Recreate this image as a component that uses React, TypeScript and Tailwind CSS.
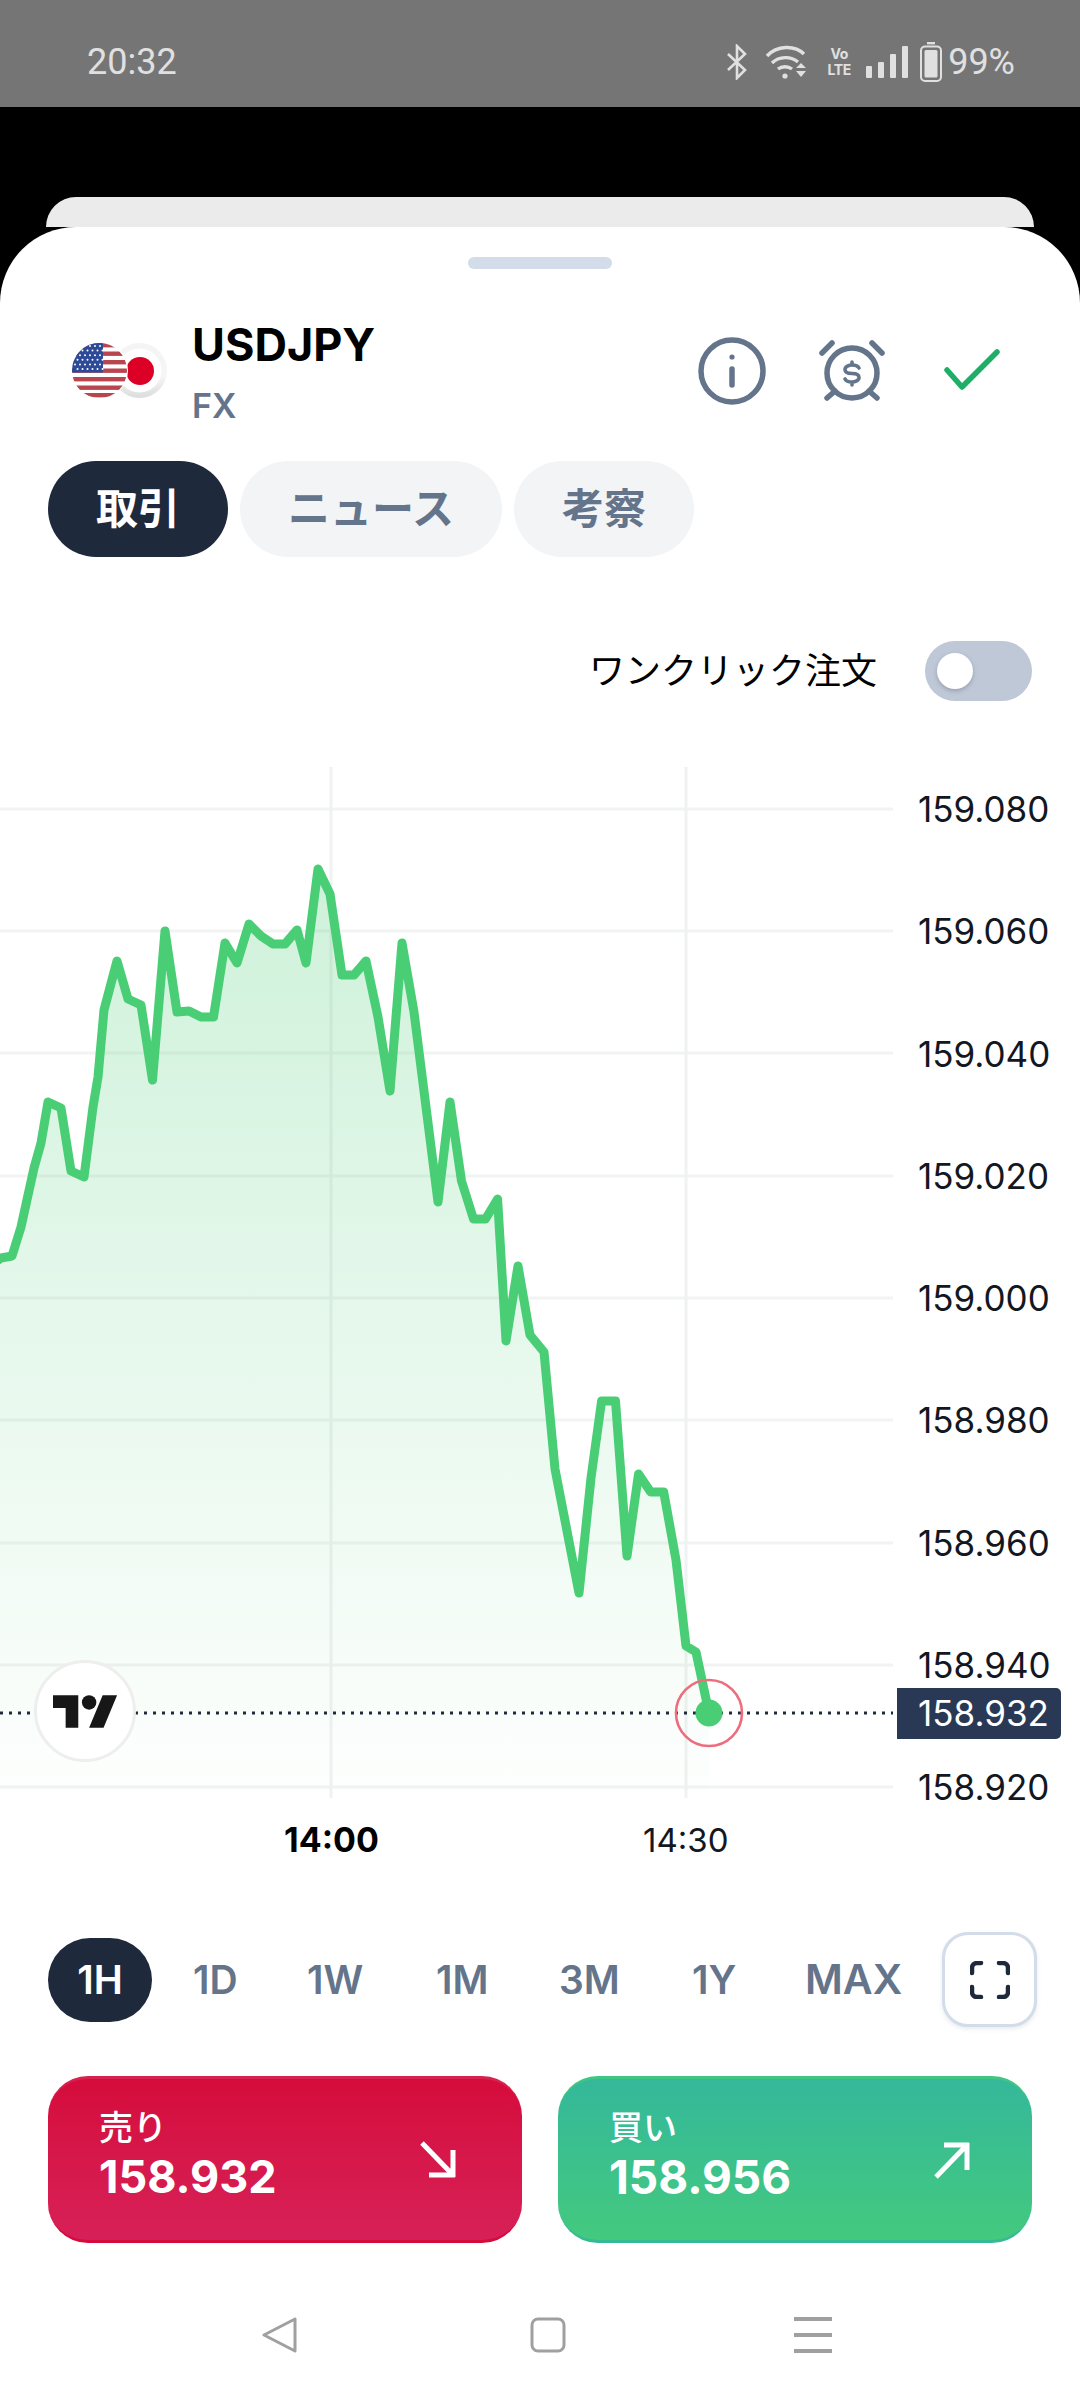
const points: [number, number][] = [
  [-6, 1263], [1, 1258], [12, 1256], [21, 1227], [34, 1168], [41, 1143], [48, 1102], [61, 1108], [71, 1171], [84, 1177],
  [93, 1107], [98, 1077], [104, 1010], [117, 961], [128, 999], [141, 1005], [152.5, 1080], [165, 931], [177, 1012], [189, 1011],
  [201, 1017], [213.5, 1017], [225, 943], [237, 963], [249, 924], [261, 936], [273, 944], [285, 944], [297, 930], [306, 963],
  [318, 869], [330, 894], [342, 975], [354, 975], [366, 961], [378, 1017], [390, 1091], [402, 943], [414, 1012], [426, 1107],
  [438, 1202], [450, 1102], [461.5, 1181], [473.5, 1219], [485.5, 1219], [497.6, 1199], [506, 1341], [518, 1266], [530, 1335], [544, 1352],
  [555, 1469], [579, 1593], [591, 1478], [601.6, 1401], [615.5, 1401], [627, 1556], [638.5, 1474], [650.7, 1492], [663.7, 1492], [676, 1560],
  [686, 1646], [696, 1652], [709, 1713],
];

const linePoints = points.map(([x, y]) => `${x},${y}`).join(' ');
const areaPoints = `${linePoints} 709,1790 -6,1790`;

const gridLines = [809, 931, 1053, 1176, 1298, 1420, 1543, 1665, 1787];
const priceLabels = ['159.080', '159.060', '159.040', '159.020', '159.000', '158.980', '158.960', '158.940', '158.920'];
const ranges = [
  { label: '1D', className: 'w-[42px] ml-[74px]' },
  { label: '1W', className: 'w-[55px] ml-[72px]' },
  { label: '1M', className: 'w-[49px] ml-[74px]' },
  { label: '3M', className: 'w-[59px] ml-[74px]' },
  { label: '1Y', className: 'w-[40px] ml-[74px]' },
  { label: 'MAX', className: 'w-[93px] ml-[73px] text-[41px]' },
];

const usStars: [number, number][] = [];
for (let row = 0; row < 6; row++) {
  for (let col = 0; col < 6; col++) {
    usStars.push([3 + col * 5 + (row % 2) * 2.5, 3 + row * 4.6]);
  }
}

function Flags() {
  return (
    <svg className="w-[95px] h-[55px] shrink-0" viewBox="0 0 95 55">
      <defs>
        <clipPath id="us-clip">
          <circle cx="27.5" cy="27.5" r="27.5" />
        </clipPath>
        <linearGradient id="jp-ring" x1="0" y1="0" x2="0" y2="1">
          <stop offset="0" stopColor="#f4f4f4" />
          <stop offset="0.6" stopColor="#f6f6f6" />
          <stop offset="1" stopColor="#dcdcdc" />
        </linearGradient>
      </defs>
      <circle cx="67.5" cy="27.5" r="27.5" fill="url(#jp-ring)" />
      <circle cx="67.5" cy="27.5" r="22" fill="#ffffff" />
      <circle cx="68" cy="28" r="14" fill="#dd0026" />
      <circle cx="27.5" cy="27.5" r="28.5" fill="#ffffff" />
      <g clipPath="url(#us-clip)">
        <rect width="55" height="55" fill="#ffffff" />
        {[0, 8.5, 17, 25.5, 34, 42.5, 50].map(y => (
          <rect key={y} y={y} width="55" height="4.4" fill="#b9464f" />
        ))}
        <rect width="31" height="29.5" fill="#2c4a97" />
        {usStars.map(([x, y]) => (
          <circle key={`${x}-${y}`} cx={x} cy={y} r="1" fill="#ffffff" />
        ))}
      </g>
    </svg>
  );
}

function StatusIcons() {
  return (
    <div className="flex items-center">
      <svg className="w-[22px] h-[36px]" viewBox="0 0 22 36" fill="none" stroke="#e0e0e0" strokeWidth="2.6">
        <path d="M2 10l17 16-8 8V2l8 8L2 26" />
      </svg>
      <svg className="w-[42px] h-[36px] ml-[17px]" viewBox="0 0 42 36" fill="none" stroke="#e0e0e0" strokeWidth="3.4">
        <path d="M2 12C12 1 30 1 39 10" />
        <path d="M7 19c7-7 19-7 26-1" />
        <path d="M13 25c4-3 10-3 14 0" />
        <circle cx="20" cy="32" r="2.6" fill="#e0e0e0" stroke="none" />
        <path d="M31 24h10l-5-5zM31 27h10l-5 6z" fill="#e0e0e0" stroke="none" />
      </svg>
      <div className="w-[22px] ml-[21px] flex flex-col items-center text-[#e0e0e0] text-[14px] font-bold leading-[16px] tracking-tight">
        <span>Vo</span>
        <span>LTE</span>
      </div>
      <svg className="w-[44px] h-[32px] ml-[16px]" viewBox="0 0 44 32" fill="#e0e0e0">
        <rect x="0" y="20" width="6" height="12" rx="1" />
        <rect x="12" y="16" width="6" height="16" rx="1" />
        <rect x="24" y="8" width="6" height="24" rx="1" />
        <rect x="36" y="0" width="6" height="32" rx="1" />
      </svg>
      <svg className="w-[22px] h-[40px] ml-[10px]" viewBox="0 0 22 40" fill="none">
        <rect x="7" y="0" width="8" height="2.4" fill="#e0e0e0" />
        <rect x="1" y="4.5" width="20" height="34.5" rx="4" stroke="#e0e0e0" strokeWidth="2" />
        <rect x="4.5" y="8" width="13" height="27.5" rx="1.5" fill="#e0e0e0" />
      </svg>
      <span className="ml-[6px] text-[36px] leading-none text-[#e0e0e0]" style={{ fontFamily: 'Roboto, sans-serif' }}>99%</span>
    </div>
  );
}

function PriceChart() {
  return (
    <svg className="w-[893px] h-[1070px] shrink-0" viewBox="0 740 893 1070">
      <defs>
        <linearGradient id="area-fill" gradientUnits="userSpaceOnUse" x1="0" y1="869" x2="0" y2="1790">
          <stop offset="0" stopColor="#4acd75" stopOpacity="0.27" />
          <stop offset="1" stopColor="#4acd75" stopOpacity="0.01" />
        </linearGradient>
      </defs>
      {gridLines.map(y => (
        <line key={y} x1="0" x2="893" y1={y} y2={y} stroke="#f2f3f3" strokeWidth="3" />
      ))}
      <line x1="331" x2="331" y1="767" y2="1798" stroke="#f0f1f1" strokeWidth="3" />
      <line x1="686" x2="686" y1="767" y2="1798" stroke="#f0f1f1" strokeWidth="3" />
      <polygon points={areaPoints} fill="url(#area-fill)" />
      <line x1="0" x2="893" y1="1713" y2="1713" stroke="#1e293b" strokeWidth="3" strokeDasharray="3 6" />
      <polyline points={linePoints} fill="none" stroke="#49ce76" strokeWidth="9" strokeLinejoin="round" strokeLinecap="round" />
      <circle cx="709" cy="1713" r="13.5" fill="#49ce76" />
      <circle cx="709" cy="1713" r="33" fill="none" stroke="#ec6e7c" strokeWidth="2.6" />
    </svg>
  );
}

export default function App() {
  return (
    <div
      className="w-[1080px] h-[2400px] bg-black flex flex-col overflow-hidden"
      style={{ fontFamily: 'Inter, "Noto Sans CJK JP", sans-serif' }}
    >
      <div className="h-[107px] shrink-0 bg-[#757575] flex items-center justify-between pl-[87px] pr-[65px] pt-[16px]">
        <span className="text-[36px] leading-none text-[#e0e0e0]" style={{ fontFamily: 'Roboto, sans-serif' }}>20:32</span>
        <StatusIcons />
      </div>

      <div className="mt-[90px] mx-[46px] h-[30px] shrink-0 rounded-t-[30px] bg-[#ebebeb]" />

      <div className="flex-1 bg-white rounded-t-[76px] flex flex-col">
        <div className="mt-[30px] mx-auto w-[144px] h-[12px] rounded-full bg-[#d3dce9]" />

        {/* header */}
        <div className="mt-[51px] h-[105px] flex items-start pl-[72px]">
          <div className="mt-[23px]"><Flags /></div>
          <div className="ml-[25px] flex flex-col">
            <span className="text-[45px] leading-[50px] font-bold text-black">USDJPY</span>
            <span className="mt-[16px] text-[34px] leading-[40px] font-semibold text-[#64748b]">FX</span>
          </div>
          <div className="ml-auto flex items-start pr-[78px]">
            <svg className="w-[70px] h-[70px] mt-[16px]" viewBox="0 0 70 70" fill="none" stroke="#64748b" strokeWidth="5.5" strokeLinecap="round">
              <circle cx="35" cy="35" r="31" />
              <line x1="35" y1="33" x2="35" y2="49" />
              <circle cx="35" cy="21" r="2.6" fill="#64748b" stroke="none" />
            </svg>
            <svg className="w-[70px] h-[70px] mt-[18px] ml-[50px]" viewBox="0 0 70 70" fill="none" stroke="#64748b" strokeWidth="5.5" strokeLinecap="round">
              <circle cx="35" cy="35" r="25" />
              <path d="M5 15 15 5M55 5l10 10M10 60l8-7M60 60l-8-7" />
              <path d="M42 30c-1-2-4-3-7-3s-7 1.500-7 4.500 3 4 7 4 7 1 7 4-4 4.500-7 4.500-6-1-7-3M35 24v2M35 45v2" strokeWidth="3.6" />
            </svg>
            <svg className="w-[60px] h-[50px] mt-[25px] ml-[55px]" viewBox="0 0 60 50" fill="none" stroke="#1fae68" strokeWidth="5.5" strokeLinecap="round" strokeLinejoin="round">
              <path d="M5 25 20 42 55 7" />
            </svg>
          </div>
        </div>

        {/* tabs */}
        <div className="mt-[36px] flex gap-[12px] pl-[48px] text-[42px] leading-none font-semibold">
          <div className="h-[96px] px-[48px] rounded-full bg-[#1e293b] text-white flex items-center">取引</div>
          <div className="h-[96px] px-[48px] rounded-full bg-[#f3f4f6] text-[#64748b] flex items-center">ニュース</div>
          <div className="h-[96px] px-[48px] rounded-full bg-[#f3f4f6] text-[#64748b] flex items-center">考察</div>
        </div>

        {/* one click toggle */}
        <div className="mt-[84px] flex items-center justify-end pr-[48px]">
          <span className="text-[36px] leading-none text-black">ワンクリック注文</span>
          <div className="ml-[48px] w-[107px] h-[60px] rounded-full bg-[#bfc8d6] flex items-center pl-[12px]">
            <div className="w-[36px] h-[36px] rounded-full bg-white shadow-[0_2px_4px_rgba(71,85,105,0.35)]" />
          </div>
        </div>

        {/* chart */}
        <div className="relative mt-[39px] h-[1070px] flex">
          <PriceChart />
          <div className="flex-1 flex flex-col justify-between pl-[25px] pt-[49px] pb-[3px] text-[35px] leading-[40px] text-[#131722]">
            {priceLabels.map(label => (
              <span key={label}>{label}</span>
            ))}
          </div>
          <div className="absolute left-[897px] top-[948px] w-[164px] h-[51px] bg-[#293955] rounded-r-[5px] text-white text-[35px] leading-[51px] pl-[21px]">
            158.932
          </div>
          <div className="absolute left-[34px] top-[920px] w-[102px] h-[102px] rounded-full bg-white border-[3px] border-[#eeeeee] flex items-center justify-center">
            <svg className="w-[65px] h-[33px]" viewBox="0 4 36 18" fill="#171717">
              <path d="M14 22H7V11H0V4h14v18zM28 22h-8l7.500-18h8L28 22z" />
              <circle cx="20" cy="8" r="4" />
            </svg>
          </div>
        </div>

        {/* time axis */}
        <div className="h-[60px] flex items-center pl-[284px] text-black">
          <span className="w-[93px] text-[34px] leading-none font-bold text-center">14:00</span>
          <span className="ml-[266px] w-[83px] text-[33px] leading-none text-center text-[#131722]">14:30</span>
        </div>

        {/* ranges */}
        <div className="mt-[62px] h-[95px] flex items-center pl-[48px] text-[39px] leading-none font-semibold text-[#64748b]">
          <div className="w-[104px] h-[84px] rounded-full bg-[#1e293b] text-white flex items-center justify-center">1H</div>
          <div className="flex items-center -ml-[33px]">
            {ranges.map(range => (
              <span key={range.label} className={`${range.className} text-center whitespace-nowrap`}>{range.label}</span>
            ))}
          </div>
          <div className="ml-[44px] w-[95px] h-[95px] rounded-[26px] border-[3px] border-[#d3dce9] bg-white shadow-[0_2px_4px_rgba(100,116,139,0.15)] flex items-center justify-center">
            <svg className="w-[40px] h-[38px]" viewBox="0 0 40 38" fill="none" stroke="#1e293b" strokeWidth="4.5" strokeLinecap="round">
              <path d="M2 12V7a5 5 0 0 1 5-5h4M29 2h4a5 5 0 0 1 5 5v5M38 26v5a5 5 0 0 1-5 5h-4M11 36H7a5 5 0 0 1-5-5v-5" />
            </svg>
          </div>
        </div>

        {/* sell / buy */}
        <div className="mt-[49px] flex gap-[36px] pl-[48px]">
          <div className="w-[474px] h-[167px] rounded-[40px] border-t-[3px] border-b-[3px] border-t-[#d6224f] border-b-[#d50b3e] bg-gradient-to-b from-[#d50b3b] to-[#d72058] text-white flex items-center justify-between pl-[51px] pr-[64px]">
            <div className="flex flex-col pb-[11px]">
              <span className="text-[34px] leading-[40px] font-medium">売り</span>
              <span className="mt-[5px] text-[45px] leading-[48px] font-bold">158.932</span>
            </div>
            <svg className="w-[40px] h-[40px]" viewBox="0 0 40 40" fill="none" stroke="#ffffff" strokeWidth="5">
              <path d="M4 3 35 35M35 10v27M11 35h26" />
            </svg>
          </div>
          <div className="w-[474px] h-[167px] rounded-[40px] border-t-[3px] border-b-[3px] border-t-[#41c583] border-b-[#36ba96] bg-gradient-to-b from-[#34b89a] to-[#44c97e] text-white flex items-center justify-between pl-[51px] pr-[60px]">
            <div className="flex flex-col pb-[11px]">
              <span className="text-[34px] leading-[40px] font-medium">買い</span>
              <span className="mt-[5px] text-[46px] leading-[48px] font-bold">158.956</span>
            </div>
            <svg className="w-[40px] h-[40px]" viewBox="0 0 40 40" fill="none" stroke="#ffffff" strokeWidth="5">
              <path d="M4 37 35 5M12 5h25M35 3v27" />
            </svg>
          </div>
        </div>

        {/* android nav */}
        <div className="mt-[74px] flex items-center pl-[262px]">
          <svg className="w-[36px] h-[36px]" viewBox="0 0 36 36" fill="none" stroke="#a0a0a0" strokeWidth="3" strokeLinejoin="round">
            <path d="M33 2v32L2 18z" />
          </svg>
          <svg className="w-[36px] h-[36px] ml-[232px]" viewBox="0 0 36 36" fill="none" stroke="#a0a0a0" strokeWidth="3">
            <rect x="2" y="2" width="32" height="32" rx="6" />
          </svg>
          <svg className="w-[38px] h-[36px] ml-[228px]" viewBox="0 0 38 36" fill="#a0a0a0">
            <rect y="0" width="38" height="4" />
            <rect y="16" width="38" height="4" />
            <rect y="32" width="38" height="4" />
          </svg>
        </div>
      </div>
    </div>
  );
}
